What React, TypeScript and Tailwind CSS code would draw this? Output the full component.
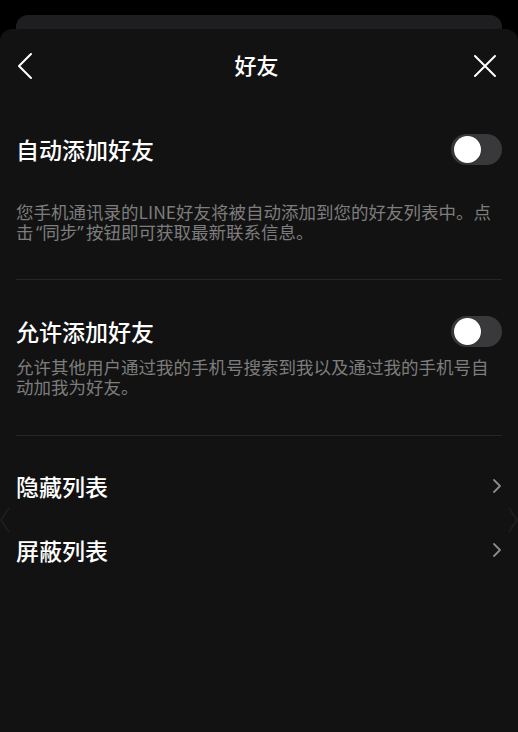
import React from 'react';

const font = { fontFamily: '"Noto Sans CJK SC", "Noto Sans", sans-serif' };

function Toggle() {
  return (
    <div className="flex h-[31px] w-[51px] items-center rounded-full bg-[#39393b] p-[3px]">
      <div className="h-[27px] w-[27px] rounded-full bg-white shadow" />
    </div>
  );
}

function Chevron() {
  return (
    <svg width="10" height="16" viewBox="0 0 10 16" fill="none" stroke="#8a8a8a" strokeWidth={1.8} strokeLinecap="round" strokeLinejoin="round">
      <path d="M2 2l6 6-6 6" />
    </svg>
  );
}

// half-width quotes like the original
const Q = ({ children, right }: { children: string; right?: boolean }) => (
  <span
    className={`inline-block w-[0.5em] ${right ? 'text-right' : 'text-left'}`}
    style={{ fontFamily: '"Noto Sans", sans-serif' }}
  >
    {children}
  </span>
);

export default function App() {
  return (
    <div className="relative min-h-[732px] w-full overflow-hidden bg-black" style={font}>
      {/* Card peeking behind the sheet */}
      <div className="mx-4 mt-[15px] h-[40px] rounded-t-[12px] bg-[#1e1e20]" />

      {/* Sheet */}
      <div className="absolute inset-x-0 top-[29px] bottom-0 rounded-t-[12px] bg-[#121212]">
        {/* Header */}
        <div className="flex h-[74px] items-center pl-4 pr-[21px]">
          <div className="flex flex-1">
            <svg width="18" height="28" viewBox="0 0 18 28" fill="none" stroke="white" strokeWidth={2} strokeLinecap="round" strokeLinejoin="round">
              <path d="M15 2L3 14l12 12" />
            </svg>
          </div>
          <h1 className="-mt-[3px] text-[22px] font-medium text-white">好友</h1>
          <div className="flex flex-1 justify-end">
            <svg width="24" height="24" viewBox="0 0 24 24" fill="none" stroke="white" strokeWidth={2} strokeLinecap="round">
              <path d="M2 2l20 20M22 2L2 22" />
            </svg>
          </div>
        </div>

        <div className="px-4">
          {/* Auto add */}
          <div className="mt-[31px] flex h-[31px] items-center justify-between">
            <span className="text-[23px] font-medium text-white">自动添加好友</span>
            <Toggle />
          </div>
          <p className="mt-[37px] text-[17.5px] leading-[20px] text-[#7d7d7d]">
            您手机通讯录的LINE好友将被自动添加到您的好友列表中。点击<Q right>“</Q>同步<Q>”</Q>按钮即可获取最新联系信息。
          </p>
          <div className="mt-[37px] h-px bg-[#262626]" />

          {/* Allow add */}
          <div className="mt-[36px] flex h-[31px] items-center justify-between">
            <span className="text-[23px] font-medium text-white">允许添加好友</span>
            <Toggle />
          </div>
          <p className="mt-[10px] text-[17.5px] leading-[20px] text-[#7d7d7d]">
            允许其他用户通过我的手机号搜索到我以及通过我的手机号自动加我为好友。
          </p>
          <div className="mt-[38px] h-px bg-[#262626]" />

          {/* Lists */}
          <div className="mt-[18px]">
            {['隐藏列表', '屏蔽列表'].map((label) => (
              <div key={label} className="flex h-[64px] items-center justify-between">
                <span className="text-[23px] font-medium text-white">{label}</span>
                <Chevron />
              </div>
            ))}
          </div>
        </div>

        {/* Faint carousel arrows */}
        <svg className="absolute left-0 top-[477px]" width="10" height="28" viewBox="0 0 10 28" fill="none" stroke="#1d1d1d" strokeWidth={2}>
          <path d="M9 2L1 14l8 12" />
        </svg>
        <svg className="absolute right-0 top-[477px]" width="10" height="28" viewBox="0 0 10 28" fill="none" stroke="#1d1d1d" strokeWidth={2}>
          <path d="M1 2l8 12-8 12" />
        </svg>
      </div>
    </div>
  );
}
